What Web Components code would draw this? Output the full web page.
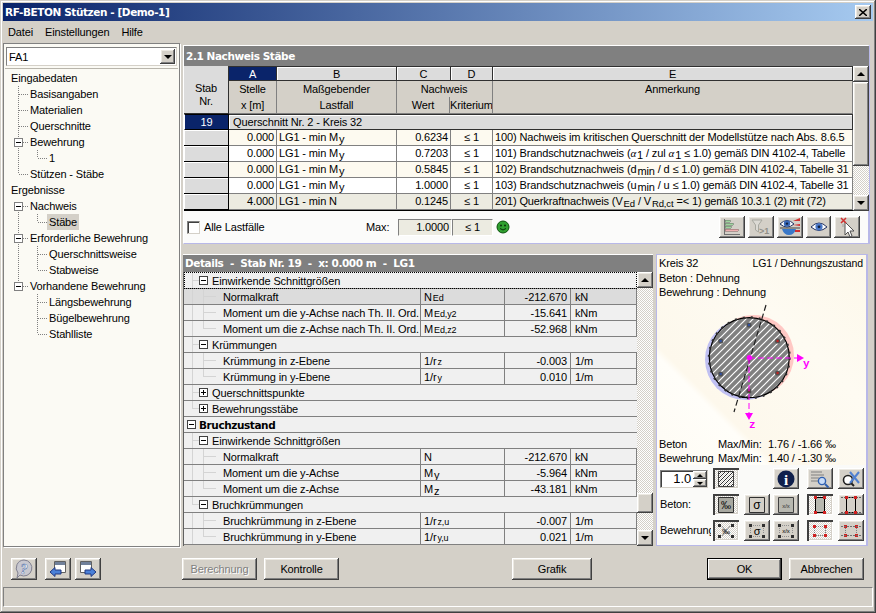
<!DOCTYPE html>
<html lang="de">
<head>
<meta charset="utf-8">
<title>RF-BETON Stützen</title>
<style>
html,body{margin:0;padding:0;background:#d4d0c8}
body{font:11px "Liberation Sans",Arial,sans-serif;color:#000;letter-spacing:-.13px}
</style>
</head>
<body>
<rf-window></rf-window>
<script>
const RAISED = 'background:#d4d0c8;box-shadow:inset -1px -1px #404040,inset 1px 1px #fff,inset -2px -2px #808080,inset 2px 2px #ece9e2';
const DITHER = 'background:repeating-conic-gradient(#d4d0c8 0 25%,#fff 0 50%) 0 0/2px 2px';
const BOLD = '700 10.5px "DejaVu Sans",sans-serif;letter-spacing:-.42px';
const svg = (w, h, body) => `<svg xmlns="http://www.w3.org/2000/svg" width="${w}" height="${h}" viewBox="0 0 ${w} ${h}">${body}</svg>`;

const ICONS = {
  bars: svg(20, 18, `<g shape-rendering="crispEdges"><path d="M2.5 1v16M2 16.5h16" stroke="#707070" fill="none"/>
    <path d="M3 2h5v2H3z" fill="#9fd49f" stroke="#708070" stroke-width=".6"/><path d="M3 5h8v2H3z" fill="#9fd49f" stroke="#708070" stroke-width=".6"/>
    <path d="M3 8h6v2H3z" fill="#9fd49f" stroke="#708070" stroke-width=".6"/><path d="M3 11h13v2H3z" fill="#f0b0b0" stroke="#907070" stroke-width=".6"/></g>`),
  filter: svg(20, 18, `<path d="M1 2h10L7.5 7v7l-3-2V7z" fill="#dcdad4" stroke="#a8a8a0"/><text x="8" y="16" font-family="Liberation Sans" font-weight="700" font-size="9" fill="#908f88">&gt;1</text>`),
  eyeRange: svg(22, 20, `<path d="M1 7q7-7 14 0q-7 6-14 0z" fill="#fff" stroke="#203060"/><circle cx="8" cy="6.6" r="3.2" fill="#3a68b8"/><circle cx="8" cy="6.6" r="1.2" fill="#102040"/>
    <path d="M14 4l7-3v3zM14 8l7-1v2z" fill="#d03030"/><path d="M1 11h20" stroke="#404040"/><path d="M3 12h14q-2 6-7 6t-7-6z" fill="#3a78c8"/><path d="M16 13h5v2h-5z" fill="#d03030"/>`),
  eye: svg(18, 14, `<path d="M1 7q8-8 16 0q-8 7-16 0z" fill="#fff" stroke="#203060"/><circle cx="9" cy="6.8" r="3.6" fill="#4a78c8"/><circle cx="9" cy="6.8" r="1.4" fill="#102040"/>`),
  cursor: svg(18, 20, `<path d="M7 5l9 9h-4l2 5-2 1-2-5-3 3z" fill="#fff" stroke="#505050"/><path d="M3 1l5 5M8 1l-5 5" stroke="#d03030" stroke-width="1.5"/><path d="M5 7v3" stroke="#a0a0a0"/>`),
  help: svg(20, 20, `<path d="M10 1a8 8 0 1 1-4 15l-3 3 1-5a8 8 0 0 1 6-13z" fill="#c8c8d0" stroke="#808090"/><text x="10" y="15" text-anchor="middle" font-family="Liberation Serif" font-style="italic" font-weight="700" font-size="15" fill="#f4f4fc" stroke="#5070a8" stroke-width=".5">?</text>`),
  back: svg(20, 18, `<path d="M6.500 1.500h11v11h-11z" fill="#fff" stroke="#606060"/><path d="M7 2h10v3H7z" fill="#70809a"/><path d="M2 12l5-4.500v2.500h6v4H7v2.500z" fill="#4a80d8" stroke="#203880"/>`),
  forward: svg(20, 18, `<path d="M2.500 1.500h11v11h-11z" fill="#fff" stroke="#606060"/><path d="M3 2h10v3H3z" fill="#70809a"/><path d="M18 12l-5-4.500v2.500H7v4h6v2.500z" fill="#4a80d8" stroke="#203880"/>`),
  hatch: svg(16, 16, `<defs><pattern id="h" width="4" height="4" patternUnits="userSpaceOnUse"><path d="M-1 5L5-1M-1 1L1-1M3 5L5 3" stroke="#303030"/></pattern></defs><path d="M.5.5h15v15H.5z" fill="url(#h)" stroke="#404040"/>`),
  info: svg(18, 18, `<circle cx="9" cy="9" r="8.5" fill="#10204c"/><text x="9" y="15" text-anchor="middle" font-family="Liberation Serif" font-weight="700" font-size="15" fill="#fff">i</text>`),
  zoom: svg(20, 18, `<path d="M1 2h11M1 5h13M1 8h8M1 11h7" stroke="#808080" fill="none"/><circle cx="12" cy="11" r="3.6" fill="#c8dcf8" stroke="#3060b0" stroke-width="1.4"/><path d="M15 14l3.5 3.5" stroke="#3060b0" stroke-width="2"/>`),
  zoomX: svg(20, 18, `<circle cx="7" cy="10" r="4.5" fill="#fff" stroke="#202020" stroke-width="1.6"/><path d="M10 13l3 3" stroke="#202020" stroke-width="2"/><path d="M9 2l9 11M18 2L9 13" stroke="#5080d0" stroke-width="2"/>`),
  perMille: svg(16, 16, `<path d="M.5.5h15v15H.5z" fill="#a8a8a0" stroke="#303030"/><text x="8" y="12" text-anchor="middle" font-family="Liberation Sans" font-size="10">‰</text>`),
  sigma: svg(16, 16, `<path d="M.5.5h15v15H.5z" fill="#d4d0c8" stroke="#303030"/><text x="8" y="12" text-anchor="middle" font-family="Liberation Sans" font-size="12">σ</text>`),
  ratio: svg(16, 16, `<path d="M.5.5h15v15H.5z" fill="#b8b8b0" stroke="#404040"/><text x="8" y="10.5" text-anchor="middle" font-family="Liberation Sans" font-size="6" fill="#303030">x/x</text>`),
  rect: svg(16, 20, `<path d="M3.5 2.5h9v15h-9z" fill="#b8b8b0" stroke="#000"/><path d="M2 1h3v3H2zM11 1h3v3h-3zM2 16h3v3H2zM11 16h3v3h-3z" fill="#d02020"/>`),
  rectMarks: svg(22, 20, `<path d="M6.5 2.5h9v15h-9z" fill="#d4d0c8" stroke="#000"/><path d="M1 2.5h20M1 17.5h20" stroke="#606060" stroke-dasharray="2 1"/><path d="M5 1h3v3H5zM14 1h3v3h-3zM5 16h3v3H5zM14 16h3v3h-3z" fill="#d02020"/>`),
  barsX: svg(18, 18, `<path d="M1 2h3v3H1zM14 2h3v3h-3zM1 13h3v3H1zM14 13h3v3h-3z" fill="#303030"/><path d="M5 4l8 10M13 4L5 14" stroke="#909090"/><text x="9" y="12" text-anchor="middle" font-family="Liberation Sans" font-size="8">‰</text>`),
  barsSigma: svg(18, 18, `<path d="M1 2h3v3H1zM14 2h3v3h-3zM1 13h3v3H1zM14 13h3v3h-3z" fill="#303030"/><path d="M5 3.5h8M5 14.5h8M2.5 6v6M15.5 6v6" stroke="#909090" stroke-dasharray="1 1"/><text x="9" y="13" text-anchor="middle" font-family="Liberation Sans" font-size="11">σ</text>`),
  barsRatio: svg(18, 18, `<path d="M1 2h3v3H1zM14 2h3v3h-3zM1 13h3v3H1zM14 13h3v3h-3z" fill="#303030"/><path d="M5 3.5h8M5 14.5h8M2.5 6v6M15.5 6v6" stroke="#909090" stroke-dasharray="1 1"/><text x="9" y="11" text-anchor="middle" font-family="Liberation Sans" font-size="6">x/x</text>`),
  barsRed: svg(18, 18, `<path d="M2 3h3v3H2zM13 3h3v3h-3zM2 12h3v3H2zM13 12h3v3h-3z" fill="#d02020"/><path d="M5 4.500h8M5 13.500h8M3.500 6v6M14.500 6v6" stroke="#808080" stroke-dasharray="1 1"/>`),
  barsRedMarks: svg(22, 18, `<path d="M4 3h3v3H4zM15 3h3v3h-3zM4 12h3v3H4zM15 12h3v3h-3z" fill="#d02020"/><path d="M1 4.500h20M1 13.500h20" stroke="#707070" stroke-dasharray="2 1"/><path d="M5.500 6v6M16.500 6v6" stroke="#808080" stroke-dasharray="1 1"/>`)
};

class RfBtn extends HTMLElement {
  constructor() {
    super();
    const shadow = this.attachShadow({mode: 'open'});
    const icon = this.getAttribute('icon');
    shadow.innerHTML = `
      <style>
        :host{display:flex;align-items:center;justify-content:center;box-sizing:border-box;height:22px;width:75px;${RAISED};flex:none}
        :host([main]){outline:1px solid #000;outline-offset:-1px;box-shadow:inset -2px -2px #404040,inset 2px 2px #fff,inset -3px -3px #808080}
        :host([disabled]){color:#808080;text-shadow:1px 1px #fff}
        :host([pressed]){${DITHER};box-shadow:inset 2px 2px #404040,inset -1px -1px #fff,inset -2px -2px #d4d0c8}
        svg{display:block}
      </style>${icon ? ICONS[icon] : '<slot></slot>'}`;
  }
}

class RfScrollbar extends HTMLElement {
  constructor() {
    super();
    const shadow = this.attachShadow({mode: 'open'});
    const before = this.getAttribute('before') || 0, thumb = this.getAttribute('thumb') || 20;
    shadow.innerHTML = `
      <style>
        :host{display:flex;flex-direction:column;width:16px;flex:none;box-sizing:border-box;${DITHER}}
        .b{height:16px;flex:none;${RAISED};display:flex;align-items:center;justify-content:center}
        .t{${RAISED};height:${thumb}px;flex:none}
        .sp{height:${before}px;flex:none}
        .r{flex:1}
        i{display:block;width:0;height:0;border:4px solid transparent;border-top:0;border-bottom:4px solid #000}
        .d i{border-bottom:0;border-top:4px solid #000}
      </style>
      <div class="b"><i></i></div><div class="sp"></div><div class="t"></div><div class="r"></div><div class="b d"><i></i></div>`;
  }
}

class RfTitlebar extends HTMLElement {
  constructor() {
    super();
    this.attachShadow({mode: 'open'}).innerHTML = `
      <style>
        :host{display:flex;align-items:center;justify-content:space-between;height:18px;padding:0 2px 0 2px;background:linear-gradient(90deg,#0a246a,#a6caf0);color:#fff;font:${BOLD};flex:none}
        .x{width:16px;height:14px;${RAISED};display:flex;align-items:center;justify-content:center}
        svg{display:block}
      </style>
      <span><slot></slot></span>
      <div class="x">${svg(8, 7, '<path d="M0 0l8 7M8 0L0 7" stroke="#000" stroke-width="1.5"/>')}</div>`;
  }
}

class RfMenubar extends HTMLElement {
  constructor() {
    super();
    this.attachShadow({mode: 'open'}).innerHTML = `
      <style>
        :host{display:flex;height:21px;align-items:center;padding-left:5px;gap:12px;flex:none}
      </style>
      <slot></slot>`;
  }
}

class RfNav extends HTMLElement {
  constructor() {
    super();
    const shadow = this.attachShadow({mode: 'open'});
    const H = (a, b) => `<path d="M${a} 8.500H${b}"/>`;
    const V = (x, y1, y2) => `<path d="M${x}.500 ${y1}V${y2}"/>`;
    const box = '<g stroke-dasharray="none"><path d="M10.500 4.500h8v8h-8z" fill="#fff" stroke="#808080"/><path d="M12 8.500h5" stroke="#000"/></g>';
    // [text, text x, guides]
    const rows = [
      ['Eingabedaten', 7, ''],
      ['Basisangaben', 26, V(14, 0, 16) + H(15, 25)],
      ['Materialien', 26, V(14, 0, 16) + H(15, 25)],
      ['Querschnitte', 26, V(14, 0, 16) + H(15, 25)],
      ['Bewehrung', 26, V(14, 0, 16) + H(19, 25) + box],
      ['1', 45, V(14, 0, 16) + V(33, 0, 8) + H(34, 43)],
      ['Stützen - Stäbe', 26, V(14, 0, 8) + H(15, 25)],
      ['Ergebnisse', 7, ''],
      ['Nachweis', 26, V(14, 8, 16) + H(19, 25) + box],
      ['Stäbe', 45, V(14, 0, 16) + V(33, 0, 8) + H(34, 43), 1],
      ['Erforderliche Bewehrung', 26, V(14, 0, 16) + H(19, 25) + box],
      ['Querschnittsweise', 45, V(14, 0, 16) + V(33, 0, 16) + H(34, 43)],
      ['Stabweise', 45, V(14, 0, 16) + V(33, 0, 8) + H(34, 43)],
      ['Vorhandene Bewehrung', 26, V(14, 0, 8) + H(19, 25) + box],
      ['Längsbewehrung', 45, V(33, 0, 16) + H(34, 43)],
      ['Bügelbewehrung', 45, V(33, 0, 16) + H(34, 43)],
      ['Stahlliste', 45, V(33, 0, 8) + H(34, 43)]
    ];
    shadow.innerHTML = `
      <style>
        :host{display:flex;flex-direction:column;width:177px;box-sizing:border-box;border:1px solid #808080;box-shadow:1px 1px #fff;background:#fbfaf4;flex:none}
        .combo{display:flex;align-items:center;justify-content:space-between;box-sizing:border-box;height:19px;margin:3px 2px 0;background:#fff;border:1px solid #808080;border-right-color:#d4d0c8;border-bottom-color:#d4d0c8;padding-left:2px}
        .arrow{width:15px;height:15px;margin-right:1px;${RAISED};display:flex;align-items:center;justify-content:center}
        .arrow i{border:4px solid transparent;border-top:4px solid #000;border-bottom:0}
        .rule{height:1px;background:#b8b5ac;margin:2px 1px 1px}
        .tree{display:flex;flex-direction:column}
        .row{display:flex;height:16px;align-items:center}
        .row svg{flex:none;display:block;fill:none;stroke:#808080;stroke-dasharray:1 1;shape-rendering:crispEdges}
        .row span{padding:0 2px;margin-left:-2px;height:16px;line-height:16px}
        .row span.sel{background:#d4d0c8}
      </style>
      <div class="combo"><span>FA1</span><div class="arrow"><i></i></div></div>
      <div class="rule"></div>
      <div class="tree">${rows.map(([t, x, g, sel]) => `<div class="row"><svg width="${x}" height="16">${g}</svg><span class="${sel ? 'sel' : ''}">${t}</span></div>`).join('')}</div>`;
  }
}

class RfResults extends HTMLElement {
  constructor() {
    super();
    const shadow = this.attachShadow({mode: 'open'});
    const My = 'M<span class="b">y</span>';
    const rows = [
      ['0.000', 'LG1 - min ' + My, '0.6234', '100) Nachweis im kritischen Querschnitt der Modellstütze nach Abs. 8.6.5', 'c'],
      ['0.000', 'LG1 - min ' + My, '0.7203', '101) Brandschutznachweis (<i>α</i><span class="b">1</span> / zul <i>α</i><span class="b">1</span> ≤ 1.0) gemäß DIN 4102-4, Tabelle', ''],
      ['0.000', 'LG1 - min ' + My, '0.5845', '102) Brandschutznachweis (d<span class="b">min</span> / d ≤ 1.0) gemäß DIN 4102-4, Tabelle 31', 'c'],
      ['0.000', 'LG1 - min ' + My, '1.0000', '103) Brandschutznachweis (u<span class="b">min</span> / u ≤ 1.0) gemäß DIN 4102-4, Tabelle 31', ''],
      ['4.000', 'LG1 - min N', '0.1245', '201) Querkraftnachweis (V<span class="b s">Ed</span> / V<span class="b s">Rd,ct</span> =&lt; 1) gemäß 10.3.1 (2) mit (72)', 'g']
    ];
    shadow.innerHTML = `
      <style>
        :host{display:flex;flex-direction:column;flex:none;height:199px;box-sizing:border-box;border-top:1px solid #fff;border-left:1px solid #fff;border-right:2px solid #b8b8e8;border-bottom:1px solid #b8b8e8;background:#fbfbfa}
        .head{height:20px;background:#808080;color:#fff;font:${BOLD};line-height:20px;padding-left:2px;margin-right:-1px;flex:none}
        .body{display:flex;flex:none;height:145px;background:#000}
        .grid{display:grid;grid-template-columns:45px 48px 120px 54px 42px 360px;grid-template-rows:15px 33px repeat(6,16px);width:669px}
        .grid>div{box-sizing:border-box;white-space:nowrap;overflow:hidden;line-height:15px}
        .ltr{background:#dcdcdc;text-align:center;border:1px solid #303030;border-left:0;box-shadow:inset 1px 1px #fff}
        .ltr.on{background:#0a246a;color:#fff;box-shadow:none}
        .corner{grid-row:1/3;background:#dcdcdc;text-align:center;padding-top:16px;line-height:13px!important;border-right:1px solid #303030;border-bottom:1px solid #303030}
        .sub{background:#d4d0c8;text-align:center;border-right:1px solid #808080;border-bottom:1px solid #808080;line-height:16px!important}
        .split{display:grid;grid-template-columns:53px 41px;grid-column:4/6;background:#d4d0c8;border-right:1px solid #808080;border-bottom:1px solid #808080;text-align:center}
        .split .top{grid-column:1/3;line-height:16px}
        .split .bot{line-height:16px}
        .split .l{border-right:1px solid #808080}
        .stab{background:#dcdcdc;box-shadow:inset 1px 1px #fff;border-right:1px solid #000;border-bottom:1px solid #000}
        .stab.on{background:#0a246a;color:#fff;text-align:center;box-shadow:none;border:1px solid #000;border-left-color:#fff}
        .qs{grid-column:2/7;background:#dcdcdc;border:1px solid #303030;border-left:0;box-shadow:inset 1px 1px #fff;padding-left:4px}
        .cell{background:#fff;border-right:1px solid #808080;border-bottom:1px solid #808080;padding:0 2px;line-height:15px}
        .cell.c{background:#fdfaf0}
        .cell.g{background:#ecebe1}
        .r{text-align:right}
        .ctr{text-align:center}
        .b{position:relative;top:2px;margin-left:1px}
        .s{font-size:9.500px}
        i{font-family:"Liberation Serif",serif}
        .tools{flex:1;display:flex;align-items:center;padding-left:3px}
        .check{width:13px;height:13px;box-sizing:border-box;border:1px solid #808080;border-right-color:#d4d0c8;border-bottom-color:#d4d0c8;background:#fff;box-shadow:inset 1px 1px #404040;margin-right:3px}
        .lab{width:60px;flex:none;margin-left:1px;white-space:nowrap}
        .max{margin-left:102px;width:32px;flex:none}
        .val{box-sizing:border-box;height:17px;background:#ecebe1;border:1px solid #808080;border-right-color:#fff;border-bottom-color:#fff;line-height:15px;padding:0 2px;flex:none}
        .smile{margin-left:3px;width:14px;height:14px;display:block;flex:none}
        .btns{display:flex;margin-left:209px;gap:3px}
        .btns rf-btn{width:26px}
      </style>
      <div class="head">2.1 Nachweis Stäbe</div>
      <div class="body">
        <div class="grid">
          <div class="corner">Stab<br>Nr.</div>
          <div class="ltr on">A</div><div class="ltr">B</div><div class="ltr">C</div><div class="ltr">D</div><div class="ltr">E</div>
          <div class="sub">Stelle<br>x [m]</div><div class="sub">Maßgebender<br>Lastfall</div>
          <div class="split"><div class="top">Nachweis</div><div class="bot l">Wert</div><div class="bot">Kriterium</div></div>
          <div class="sub">Anmerkung</div>
          <div class="stab on">19</div><div class="qs">Querschnitt Nr. 2 - Kreis 32</div>
          ${rows.map(([a, b, c, e, k]) => `<div class="stab"></div><div class="cell r ${k}">${a}</div><div class="cell ${k}">${b}</div><div class="cell r ${k}">${c}</div><div class="cell ctr ${k}">≤ 1</div><div class="cell ${k}">${e}</div>`).join('')}
        </div>
        <rf-scrollbar thumb="84"></rf-scrollbar>
      </div>
      <div class="tools">
        <div class="check"></div><span class="lab">Alle Lastfälle</span>
        <span class="max">Max:</span>
        <div class="val r" style="width:54px">1.0000</div><div class="val ctr" style="width:41px">≤ 1</div>
        <svg class="smile" viewBox="0 0 14 14"><circle cx="7" cy="7" r="6" fill="#30a030" stroke="#0a500a"/><circle cx="5" cy="5.500" r="1" fill="#0a300a"/><circle cx="9" cy="5.500" r="1" fill="#0a300a"/><path d="M4 8.500q3 3 6 0" fill="none" stroke="#0a300a"/></svg>
        <div class="btns"><rf-btn icon="bars"></rf-btn><rf-btn icon="filter"></rf-btn><rf-btn icon="eyeRange"></rf-btn><rf-btn icon="eye" style="width:25px"></rf-btn><rf-btn icon="cursor"></rf-btn></div>
      </div>`;
  }
}

class RfDetails extends HTMLElement {
  constructor() {
    super();
    const shadow = this.attachShadow({mode: 'open'});
    const V = (x, y1, y2) => `<path d="M${x}.500 ${y1}V${y2}"/>`;
    const H = (a, b) => `<path d="M${a} 7.500H${b}"/>`;
    const box = (plus) => `<path d="M15.500 3.500h8v8h-8z" fill="#fff" stroke="#404040"/><path d="M17 7.500h5${plus ? 'M19.500 5v5' : ''}" stroke="#000"/>`;
    const group = (t, plus, last) => ({g: V(8, 0, last ? 8 : 15) + H(9, 15) + box(plus), t, w: 28});
    const leaf = (t, s, v, u, last, sel) => ({g: V(8, 0, 15) + V(19, 0, last ? 8 : 15) + H(20, 32), t, s, v, u, w: 39, sel});
    const rows = [
      group('Einwirkende Schnittgrößen'),
      leaf('Normalkraft', 'N<span class="m">Ed</span>', '-212.670', 'kN', 0, 1),
      leaf('Moment um die y-Achse nach Th. II. Ord.', 'M<span class="m">Ed,y2</span>', '-15.641', 'kNm'),
      leaf('Moment um die z-Achse nach Th. II. Ord.', 'M<span class="m">Ed,z2</span>', '-52.968', 'kNm', 1),
      group('Krümmungen'),
      leaf('Krümmung in z-Ebene', '1/r<span class="m">z</span>', '-0.003', '1/m'),
      leaf('Krümmung in y-Ebene', '1/r<span class="m">y</span>', '0.010', '1/m', 1),
      group('Querschnittspunkte', 1),
      group('Bewehrungsstäbe', 1, 1),
      {top: 'Bruchzustand'},
      group('Einwirkende Schnittgrößen'),
      leaf('Normalkraft', 'N', '-212.670', 'kN'),
      leaf('Moment um die y-Achse', 'M<span class="m l">y</span>', '-5.964', 'kNm'),
      leaf('Moment um die z-Achse', 'M<span class="m l">z</span>', '-43.181', 'kNm', 1),
      group('Bruchkrümmungen', 0, 1),
      leaf('Bruchkrümmung in z-Ebene', '1/r<span class="m">z,u</span>', '-0.007', '1/m'),
      leaf('Bruchkrümmung in y-Ebene', '1/r<span class="m">y,u</span>', '0.021', '1/m', 1)
    ];
    const row = (r, i) => {
      if (r.top) return `<div class="row"><div class="c span topc">${svg(14, 15, '<path d="M3.500 3.500h8v8h-8z" fill="#fff" stroke="#404040"/><path d="M5 7.500h5" stroke="#000"/>')}<b>${r.top}</b></div></div>`;
      const guides = `<svg width="${r.w}" height="15">${r.g}</svg>`;
      if (!r.s) return `<div class="row ${i ? '' : 'first'}"><div class="c span">${guides}<span>${r.t}</span></div></div>`;
      return `<div class="row ${r.sel ? 'sel' : ''}"><div class="c">${guides}<span>${r.t}</span></div><div class="c sym">${r.s}</div><div class="c num">${r.v}</div><div class="c unit">${r.u}</div></div>`;
    };
    shadow.innerHTML = `
      <style>
        :host{display:flex;flex-direction:column;width:470px;flex:none}
        .head{height:17px;background:#808080;color:#fff;font:${BOLD};line-height:17px;padding-left:2px;border-top:1px solid #fff;flex:none;white-space:pre}
        .body{display:flex;flex:1;min-height:0}
        .tbl{width:454px;flex:none;border-left:1px solid #606060;box-sizing:border-box}
        .row{display:grid;grid-template-columns:237px 84px 66px 66px;height:16px;box-sizing:border-box;border-bottom:1px solid #808080;background:#f0f0f0}
        .row.first{height:17px;outline:1px dotted #000;outline-offset:-1px;padding-top:1px}
        .row.sel{background:#dcdcdc}
        .c{display:flex;align-items:center;height:15px;box-sizing:border-box;border-right:1px solid #808080;white-space:nowrap;overflow:hidden}
        .c svg{flex:none;display:block;fill:none;stroke:#d4d4d4;shape-rendering:crispEdges}
        .span{grid-column:1/-1;border-right:0}
        .sym{padding-left:3px}
        .m{font-size:9px;position:relative;top:1px;margin-left:1px}
        .m.l{font-size:11px;top:2px}
        .num{justify-content:flex-end;padding-right:3px}
        .unit{padding-left:4px}
        .topc b{font:${BOLD};margin-left:1px}
      </style>
      <div class="head">Details  -  Stab Nr. 19  -  x: 0.000 m  -  LG1</div>
      <div class="body"><div class="tbl">${rows.map(row).join('')}</div><rf-scrollbar before="205" thumb="20"></rf-scrollbar></div>`;
  }
}

class RfGraphic extends HTMLElement {
  constructor() {
    super();
    const shadow = this.attachShadow({mode: 'open'});
    const dots = [[749, 324, '#3050a0'], [720.700, 340, '#3050a0'], [720.700, 373, '#3050a0'], [749, 390, '#703030'], [777.600, 372, '#c02020'], [777.600, 340, '#c02020']];
    shadow.innerHTML = `
      <style>
        :host{display:flex;flex-direction:column;width:212px;flex:none;box-sizing:border-box;border:1px solid #b8b8e8;border-right-width:2px;background:linear-gradient(45deg,#fdf9ef 0%,#fffef9 38%,#fdf8ec 40%,#fefbf2 70%,#fdf8ea 100%)}
        .top{display:flex;justify-content:space-between;align-items:baseline;padding:1px 3px 0 2px;height:15px;line-height:15px;flex:none}
        .ln{padding-left:2px;height:14px;line-height:14px;flex:none}
        .top small{font-size:10.500px}
        .draw{flex:1;min-height:0}
        .draw svg{display:block}
        .mm{display:grid;grid-template-columns:59px 50px 1fr;padding-left:2px;line-height:14px;flex:none}
        .ctl{flex:none;height:80px;background:#fafaf8;display:grid;grid-template-columns:53px 31px 29px 34px 31px 26px;grid-template-rows:26px 26px 24px;padding:3px 0 0 3px;box-sizing:border-box;align-items:start}
        .ctl rf-btn{width:26px;height:21px}
        .ctl .lbl{height:21px;line-height:21px;overflow:hidden;width:51px;white-space:nowrap}
        .spin{display:flex;width:48px;height:18px;margin-top:2px;box-sizing:border-box;background:#fff;border:1px solid #808080;border-right-color:#d4d0c8;border-bottom-color:#d4d0c8;box-shadow:inset 1px 1px #404040;text-align:right;font-size:13px;line-height:16px}
        .spin span{flex:1;padding-right:2px}
        .arrows{width:14px;display:flex;flex-direction:column}
        .arrows div{flex:1;${RAISED};display:flex;align-items:center;justify-content:center}
        .arrows i{border:3px solid transparent;border-top:0;border-bottom:3px solid #000}
        .arrows div+div i{border-bottom:0;border-top:3px solid #000}
        .gap{visibility:hidden}
      </style>
      <div class="top"><span>Kreis 32</span><small>LG1 / Dehnungszustand</small></div>
      <div class="ln">Beton : Dehnung</div>
      <div class="ln">Bewehrung : Dehnung</div>
      <div class="draw"><svg width="209" height="139" viewBox="657 298 209 139">
        <defs><pattern id="ht" width="7" height="7" patternUnits="userSpaceOnUse"><path d="M-1 8L8-1M-1 1L1-1M6 8L8 6" stroke="#fff" stroke-width="1.200"/></pattern></defs>
        <circle cx="745.500" cy="358.500" r="40.500" fill="#c0c0f2"/><circle cx="753.500" cy="354.500" r="40.500" fill="#ffc8c4"/>
        <circle cx="749.300" cy="356.700" r="40" fill="#808080"/><circle cx="749.300" cy="356.700" r="40" fill="url(#ht)" stroke="#000" stroke-width="1.200"/>
        <circle cx="749.300" cy="356.700" r="40.500" fill="none" stroke="#303030" stroke-width="2" stroke-dasharray="2 6"/>
        ${dots.map(([x, y, c]) => `<circle cx="${x}" cy="${y}" r="2.600" fill="#505050"/><circle cx="${x}" cy="${y}" r="1.200" fill="${c}"/>`).join('')}
        <path d="M766 304L734 411" stroke="#202020" stroke-width="1.200" stroke-dasharray="6 3" fill="none"/>
        <path d="M749 357H797M749 357V412" stroke="#ff00ff" stroke-dasharray="6 3" fill="none"/>
        <path d="M797 353l7 4-7 4zM745 412h8l-4 7z" fill="#ff00ff"/><circle cx="749.300" cy="356.700" r="2.600" fill="#ff00ff"/>
        <text x="803" y="366" font-family="Liberation Mono,monospace" font-weight="700" font-size="11" fill="#ff00ff">y</text>
        <text x="749" y="427" font-family="Liberation Mono,monospace" font-weight="700" font-size="11" fill="#ff00ff">z</text>
      </svg></div>
      <div class="mm"><span>Beton</span><span>Max/Min:</span><span>1.76 / -1.66 ‰</span><span>Bewehrung</span><span>Max/Min:</span><span>1.40 / -1.30 ‰</span></div>
      <div class="ctl">
        <div class="spin"><span>1.0</span><div class="arrows"><div><i></i></div><div><i></i></div></div></div>
        <rf-btn icon="hatch" pressed></rf-btn><div class="gap"></div><rf-btn icon="info"></rf-btn><rf-btn icon="zoom"></rf-btn><rf-btn icon="zoomX"></rf-btn>
        <div class="lbl">Beton:</div>
        <rf-btn icon="perMille" pressed></rf-btn><rf-btn icon="sigma"></rf-btn><rf-btn icon="ratio"></rf-btn><rf-btn icon="rect" pressed></rf-btn><rf-btn icon="rectMarks"></rf-btn>
        <div class="lbl">Bewehrung</div>
        <rf-btn icon="barsX" pressed></rf-btn><rf-btn icon="barsSigma"></rf-btn><rf-btn icon="barsRatio"></rf-btn><rf-btn icon="barsRed" pressed></rf-btn><rf-btn icon="barsRedMarks"></rf-btn>
      </div>`;
  }
}

class RfFooter extends HTMLElement {
  constructor() {
    super();
    this.attachShadow({mode: 'open'}).innerHTML = `
      <style>
        :host{display:flex;align-items:center;height:40px;padding:11px 0 7px 8px;box-sizing:border-box;flex:none}
        rf-btn.i{width:26px}
      </style>
      <rf-btn class="i" icon="help"></rf-btn>
      <rf-btn class="i" icon="back" style="margin-left:8px"></rf-btn>
      <rf-btn class="i" icon="forward" style="margin-left:4px"></rf-btn>
      <rf-btn disabled style="margin-left:81px">Berechnung</rf-btn>
      <rf-btn style="margin-left:7px">Kontrolle</rf-btn>
      <rf-btn style="margin-left:173px;width:80px">Grafik</rf-btn>
      <rf-btn main style="margin-left:115px">OK</rf-btn>
      <rf-btn style="margin-left:7px">Abbrechen</rf-btn>`;
  }
}

class RfWindow extends HTMLElement {
  constructor() {
    super();
    this.attachShadow({mode: 'open'}).innerHTML = `
      <style>
        :host{display:flex;flex-direction:column;width:876px;height:613px;box-sizing:border-box;padding:3px 3px 6px 3px;background:#d4d0c8;box-shadow:inset -1px -1px #404040,inset 1px 1px #d4d0c8,inset -2px -2px #808080,inset 2px 2px #fff;overflow:hidden}
        .main{display:flex;height:504px;margin-top:1px;gap:3px;flex:none}
        .right{display:flex;flex-direction:column;width:687px;flex:none;padding-top:2px}
        .split{height:10px;flex:none;background:#d4d0c8}
        .lower{display:flex;gap:3px;height:292px;flex:none}
        .status{height:20px;flex:none;box-sizing:border-box;border:1px solid #808080;border-right-color:#fff;border-bottom-color:#fff}
      </style>
      <rf-titlebar>RF-BETON Stützen - [Demo-1]</rf-titlebar>
      <rf-menubar><span>Datei</span><span>Einstellungen</span><span>Hilfe</span></rf-menubar>
      <div class="main">
        <rf-nav></rf-nav>
        <div class="right">
          <rf-results></rf-results>
          <div class="split"></div>
          <div class="lower"><rf-details></rf-details><rf-graphic></rf-graphic></div>
        </div>
      </div>
      <rf-footer></rf-footer>
      <div class="status"></div>`;
  }
}

customElements.define('rf-btn', RfBtn);
customElements.define('rf-scrollbar', RfScrollbar);
customElements.define('rf-titlebar', RfTitlebar);
customElements.define('rf-menubar', RfMenubar);
customElements.define('rf-nav', RfNav);
customElements.define('rf-results', RfResults);
customElements.define('rf-details', RfDetails);
customElements.define('rf-graphic', RfGraphic);
customElements.define('rf-footer', RfFooter);
customElements.define('rf-window', RfWindow);
</script>
</body>
</html>
